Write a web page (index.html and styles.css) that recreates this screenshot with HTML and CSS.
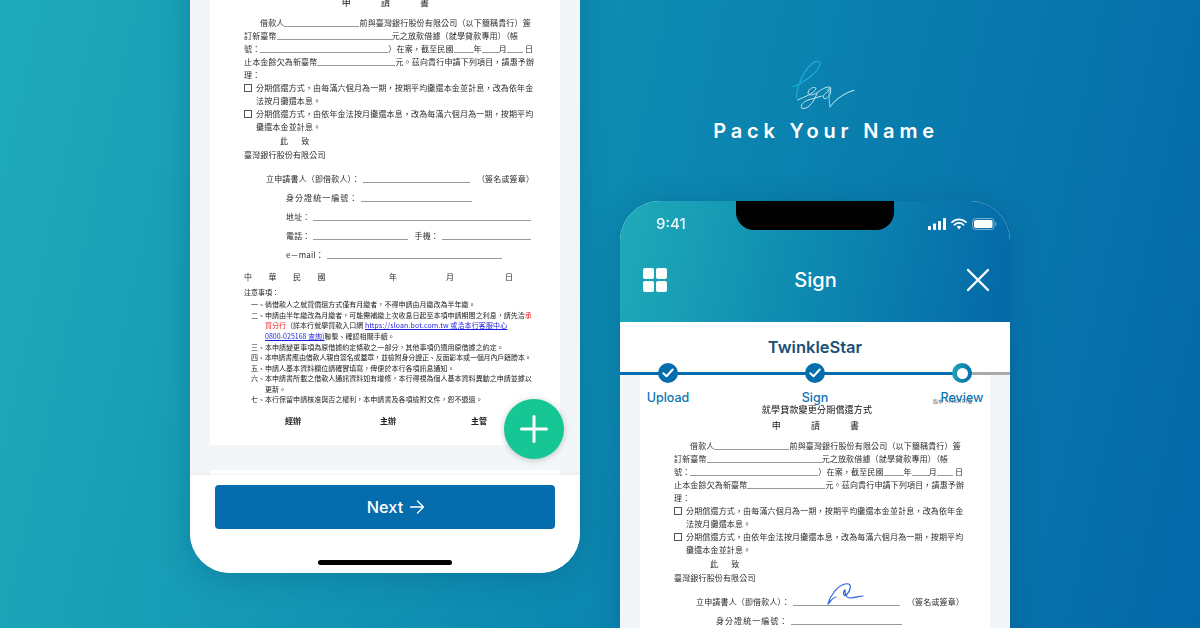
FILE: index.html
```html
<!DOCTYPE html>
<html lang="zh-Hant">
<head>
<meta charset="utf-8">
<title>Pack Your Name</title>
<link rel="stylesheet" href="styles.css">
</head>
<body>
<main class="canvas">

  <section class="phone phone-left">
    <div class="viewport">
      <article class="page">
        <div class="doc">
          <div class="l title">就學貸款變更分期償還方式</div>
          <div class="l subtitle"><span>申</span><span>請</span><span>書</span></div>
          <div class="l first"><span class="in16">借款人</span><i class="u u75"></i><span>前與臺灣銀行股份有限公司（以下簡稱貴行）簽</span></div>
          <div class="l"><span>訂新臺幣</span><i class="u u115"></i><span>元之放款借據（就學貸款專用）（帳</span></div>
          <div class="l"><span>號：</span><i class="u u128"></i><span>）在案，截至民國</span><i class="u u20"></i><span>年</span><i class="u u17"></i><span>月</span><i class="u u16"></i><span class="ml2">日</span></div>
          <div class="l"><span>止本金餘欠為新臺幣</span><i class="u u78"></i><span>元。茲向貴行申請下列項目，請惠予辦</span></div>
          <div class="l"><span>理：</span></div>
          <div class="l"><b class="box"></b><span>分期償還方式，由每滿六個月為一期，按期平均攤還本金並計息，改為依年金</span></div>
          <div class="l in12"><span>法按月攤還本息。</span></div>
          <div class="l"><b class="box"></b><span>分期償還方式，由依年金法按月攤還本息，改為每滿六個月為一期，按期平均</span></div>
          <div class="l in12"><span>攤還本金並計息。</span></div>
          <div class="l gap14 in36 wide"><span>此</span><span>致</span></div>
          <div class="l gap14"><span>臺灣銀行股份有限公司</span></div>
          <div class="l gap24 in22"><span>立申請書人（即借款人）：</span><i class="u u107 ml3"></i><span class="ml7">（簽名或簽章）</span></div>
          <div class="l gap19 in42"><span class="sp1">身分證統一編號：</span><i class="u u111 ml3"></i></div>
          <div class="l gap19 in42"><span>地址：</span><i class="u u218 ml3"></i></div>
          <div class="l gap19 in42"><span>電話：</span><i class="u u95 ml3"></i><span class="ml6">手機：</span><i class="u u89 ml3"></i></div>
          <div class="l gap19 in42"><span>e－mail：</span><i class="u u175 ml3"></i></div>
          <div class="l gap22 date"><span class="c">中</span><span class="c">華</span><span class="c">民</span><span class="c">國</span><span class="c-y">年</span><span class="c-m">月</span><span>日</span></div>
          <div class="n gap15"><span>注意事項：</span></div>
          <div class="n gap12 in7"><span>一、倘借款人之就貸償還方式僅有月繳者，不得申請由月繳改為半年繳。</span></div>
          <div class="n in7"><span>二、申請由半年繳改為月繳者，可能需補繳上次收息日起至本項申請期間之利息，請先洽<em>承</em></span></div>
          <div class="n in21"><span><em>貸分行</em>（詳本行就學貸款入口網 <a class="url">https://sloan.bot.com.tw 或洽本行客服中心</a></span></div>
          <div class="n in21"><span><a>0800-025168 查詢)</a>聯繫、確認相關手續。</span></div>
          <div class="n in7"><span>三、本申請變更事項為原借據約定條款之一部分，其他事項仍適用原借據之約定。</span></div>
          <div class="n in7 tight"><span>四、本申請書應由借款人親自簽名或蓋章，並檢附身分證正、反面影本或一個月內戶籍謄本。</span></div>
          <div class="n in7"><span>五、申請人基本資料欄位請確實填寫，俾便於本行各項訊息通知。</span></div>
          <div class="n in7"><span>六、本申請書所載之借款人通訊資料如有增修，本行得視為個人基本資料異動之申請並據以</span></div>
          <div class="n in21"><span>更新。</span></div>
          <div class="n in7"><span>七、本行保留申請核准與否之權利，本申請書及各項檢附文件，恕不退還。</span></div>
          <div class="n gap22 sign-row"><span class="s1">經辦</span><span class="s2">主辦</span><span>主管</span></div>
        </div>
      </article>
      <div class="next-page"></div>
      <button class="fab" type="button" aria-label="Add">
        <svg viewBox="0 0 30 30" width="30" height="30"><path d="M15 2.5v25M2.5 15h25" stroke="#fff" stroke-width="3" stroke-linecap="round"/></svg>
      </button>
    </div>
    <footer class="bar">
      <button class="next" type="button">Next
        <svg viewBox="0 0 16 16" width="16" height="16"><path d="M1.5 8h12.5M8.5 2l6 6-6 6" fill="none" stroke="#fff" stroke-width="1.3" stroke-linecap="round" stroke-linejoin="round"/></svg>
      </button>
      <div class="home"></div>
    </footer>
  </section>

  <section class="brand">
    <svg class="brand-sign" viewBox="0 0 90 65" width="90" height="65" fill="none" stroke-linecap="round" stroke-linejoin="round">
      <defs>
        <linearGradient id="sg" x1="0" y1="0" x2="1" y2="0.6">
          <stop offset="0" stop-color="#4fc0e0"/>
          <stop offset="0.45" stop-color="#8fd0e6"/>
          <stop offset="1" stop-color="#e2f1f7"/>
        </linearGradient>
      </defs>
      <path d="M17.6 48C17.5 37 24 22 32 14.500C36 11 41 10 41 13.500C41 20 30 28.500 22 33C19 35 16 36 14 36.500" stroke="#1cb0da" stroke-width="1.100"/>
      <path d="M18.500 50C26 47 35 43 37 39C37.500 36.500 31.500 37 29.500 41C27.500 46 34 46 39 42C43 39 50 35 52 38C51.500 41 46 42 44.500 46C43.500 50 47.500 49 50 46C53 42 52 36 48 40" stroke="#c0e3f0" stroke-width="1"/>
      <path d="M38 43C36 50 30 59 24 58.500C20 58 23 52 29 50C33 49 39 47 43 46" stroke="#c8e6f2" stroke-width="1"/>
      <path d="M50 37C50 44 50 53 51 57C56 50 63 45 70 42C73 41 72 41 75 40.500" stroke="url(#sg)" stroke-width="1.100"/>
    </svg>
    <h1 class="brand-name">Pack Your Name</h1>
  </section>

  <section class="phone phone-right">
    <header class="head">
      <div class="notch"></div>
      <div class="status">
        <span class="time">9:41</span>
        <span class="status-icons">
          <svg viewBox="0 0 18 12" width="18" height="12"><g fill="#fff"><rect x="0" y="8" width="3" height="4" rx=".7"/><rect x="5" y="5.500" width="3" height="6.500" rx=".7"/><rect x="10" y="3" width="3" height="9" rx=".7"/><rect x="15" y="0" width="3" height="12" rx=".7"/></g></svg>
          <svg viewBox="0 0 16 12" width="16" height="12"><path d="M1 4.200a10 10 0 0 1 14 0M3.400 6.800a6.600 6.600 0 0 1 9.200 0" fill="none" stroke="#fff" stroke-width="1.700" stroke-linecap="round"/><path d="M5.800 8.800a3.200 3.200 0 0 1 4.400 0L8 11.500z" fill="#fff"/></svg>
          <svg viewBox="0 0 25 12" width="25" height="12"><rect x=".5" y=".5" width="21.500" height="11" rx="3" fill="none" stroke="#fff" stroke-opacity=".45"/><rect x="2" y="2" width="18.500" height="8" rx="1.700" fill="#fff"/><path d="M23.200 4v4a2.200 2.200 0 0 0 0-4z" fill="#fff" fill-opacity=".45"/></svg>
        </span>
      </div>
      <div class="nav">
        <svg viewBox="0 0 24 24" width="24" height="24"><g fill="#fff"><rect width="11" height="11" rx="2"/><rect x="13" width="11" height="11" rx="2"/><rect y="13" width="11" height="11" rx="2"/><rect x="13" y="13" width="11" height="11" rx="2"/></g></svg>
        <span class="nav-title">Sign</span>
        <svg viewBox="0 0 24 24" width="24" height="24"><path d="M2 2l20 20M22 2L2 22" stroke="#fff" stroke-width="2.400" stroke-linecap="round"/></svg>
      </div>
    </header>
    <div class="steps-head">
      <h2 class="flow-name">TwinkleStar</h2>
    </div>
    <div class="viewport-right">
      <div class="stepper">
        <div class="track"><i class="track-done"></i><i class="track-rest"></i></div>
        <div class="step">
          <span class="dot"><svg viewBox="0 0 12 10" width="12" height="10"><path d="M1.300 5.200l3.200 3L10.700 1.500" fill="none" stroke="#fff" stroke-width="2" stroke-linecap="round" stroke-linejoin="round"/></svg></span>
          <span class="label">Upload</span>
        </div>
        <div class="step">
          <span class="dot"><svg viewBox="0 0 12 10" width="12" height="10"><path d="M1.300 5.200l3.200 3L10.700 1.500" fill="none" stroke="#fff" stroke-width="2" stroke-linecap="round" stroke-linejoin="round"/></svg></span>
          <span class="label">Sign</span>
        </div>
        <div class="step">
          <span class="dot dot-now"><b></b></span>
          <span class="label">Review</span>
        </div>
      </div>
      <article class="page page-right">
        <div class="doc">
          <div class="tiny">版本：1100701版</div>
          <div class="l title">就學貸款變更分期償還方式</div>
          <div class="l subtitle"><span>申</span><span>請</span><span>書</span></div>
          <div class="l first"><span class="in16">借款人</span><i class="u u75"></i><span>前與臺灣銀行股份有限公司（以下簡稱貴行）簽</span></div>
          <div class="l"><span>訂新臺幣</span><i class="u u115"></i><span>元之放款借據（就學貸款專用）（帳</span></div>
          <div class="l"><span>號：</span><i class="u u128"></i><span>）在案，截至民國</span><i class="u u20"></i><span>年</span><i class="u u17"></i><span>月</span><i class="u u16"></i><span class="ml2">日</span></div>
          <div class="l"><span>止本金餘欠為新臺幣</span><i class="u u78"></i><span>元。茲向貴行申請下列項目，請惠予辦</span></div>
          <div class="l"><span>理：</span></div>
          <div class="l"><b class="box"></b><span>分期償還方式，由每滿六個月為一期，按期平均攤還本金並計息，改為依年金</span></div>
          <div class="l in12"><span>法按月攤還本息。</span></div>
          <div class="l"><b class="box"></b><span>分期償還方式，由依年金法按月攤還本息，改為每滿六個月為一期，按期平均</span></div>
          <div class="l in12"><span>攤還本金並計息。</span></div>
          <div class="l gap14 in36 wide"><span>此</span><span>致</span></div>
          <div class="l gap14"><span>臺灣銀行股份有限公司</span></div>
          <div class="l gap24 in22"><span>立申請書人（即借款人）：</span><i class="u u107 ml3 signed"><svg viewBox="0 0 45 28" width="45" height="28" class="ink"><path d="M4 26C6 18 13 8 21 6C26 5 27 7 26 11C25 15 21 19 20 17C19 15 20 13 21 12C21 16 22 20 26 20C31 20 35 18 39 18M4 26C6 24 8 20 12 19" fill="none" stroke="#2a5fe6" stroke-width="1.200" stroke-linecap="round" stroke-linejoin="round"/></svg></i><span class="ml7">（簽名或簽章）</span></div>
          <div class="l gap19 in42"><span class="sp1">身分證統一編號：</span><i class="u u111 ml3"></i></div>
        </div>
      </article>
    </div>
  </section>

</main>
</body>
</html>
```

FILE: styles.css
```css
* { box-sizing: border-box; margin: 0; padding: 0; }
html, body { width: 1200px; height: 628px; overflow: hidden; }
body { font-family: Inter, "Noto Sans", sans-serif; }

.canvas {
  position: relative;
  width: 1200px;
  height: 628px;
  overflow: hidden;
  background: linear-gradient(102deg, #1fabb9 0%, #0d8bb1 48%, #0468a9 100%);
}

/* ---------- phones ---------- */
.phone {
  position: absolute;
  width: 390px;
  background: #f3f6f8;
  border-radius: 40px;
  overflow: hidden;
  box-shadow: 0 4px 30px rgba(0, 60, 110, .28);
  display: flex;
  flex-direction: column;
}
.phone-left { left: 190px; top: -67px; height: 640px; }
.phone-right { left: 620px; top: 201px; height: 470px; background: #fff; }

.viewport {
  position: relative;
  flex: 1;
  overflow: visible;
  padding-top: 16px;
  display: flex;
  flex-direction: column;
  align-items: center;
  min-height: 0;
}
.page {
  width: 350px;
  height: 496px;
  flex: none;
  background: #fff;
  overflow: hidden;
}
.next-page {
  width: 350px;
  flex: none;
  height: 5px;
  margin-top: 25px;
  background: #fff;
}
.fab {
  position: absolute;
  left: 314px;
  top: 466px;
  width: 60px;
  height: 60px;
  border: 0;
  border-radius: 50%;
  background: #16c795;
  box-shadow: 0 1px 6px rgba(0, 0, 0, .22);
  display: flex;
  align-items: center;
  justify-content: center;
  z-index: 2;
}
.bar {
  flex: none;
  height: 98px;
  background: #fff;
  padding: 10px 25px 0;
  position: relative;
  box-shadow: 0 -1px 3px rgba(0, 0, 0, .05);
  display: flex;
  flex-direction: column;
  align-items: center;
}
.next {
  width: 340px;
  height: 44px;
  border: 0;
  padding-left: 22px;
  border-radius: 4px;
  background: #056cae;
  color: #fff;
  font: 500 16.300px Inter, sans-serif;
  display: flex;
  align-items: center;
  justify-content: center;
  gap: 6px;
}
.home {
  width: 134px;
  height: 5px;
  margin-top: 31px;
  border-radius: 3px;
  background: #000;
}

/* ---------- document ---------- */
.doc {
  padding: 31px 28px 0 34px;
  width: 350px;
  font-family: "Noto Sans CJK TC", sans-serif;
  font-size: 8px;
  letter-spacing: .16px;
  color: #2b2b2b;
  filter: blur(.35px);
}
.l { display: flex; align-items: center; height: 13px; white-space: nowrap; }
.n {
  display: flex;
  align-items: center;
  height: 10.550px;
  white-space: nowrap;
  font-size: 7px;
  letter-spacing: .02px;
  color: #222;
}
.tight { letter-spacing: -.16px; }
.url { letter-spacing: .12px; }
.sp1 { letter-spacing: 1.050px; }
.title {
  justify-content: center;
  font-size: 9px;
  letter-spacing: .2px;
  color: #111;
  padding-right: 2px;
  height: 12px;
}
.subtitle {
  height: 20px;
  gap: 30px;
  justify-content: center;
  padding-right: 5px;
  color: #111;
  font-size: 9px;
}
.first { height: 17px; padding-top: 4px; }
.u { display: block; height: 9px; border-bottom: 1px solid #999; flex: none; position: relative; }
.u16 { width: 16px; } .u17 { width: 17px; } .u20 { width: 20px; }
.u75 { width: 75px; } .u78 { width: 78px; } .u89 { width: 89px; }
.u95 { width: 95px; } .u107 { width: 107px; } .u111 { width: 111px; }
.u115 { width: 115px; } .u128 { width: 128px; } .u175 { width: 175px; }
.u218 { width: 218px; }
.ml2 { margin-left: 2px; } .ml3 { margin-left: 3px; }
.ml6 { margin-left: 6px; } .ml7 { margin-left: 7px; }
.in16 { margin-left: 16px; }
.in12 { padding-left: 12px; } .in36 { padding-left: 36px; }
.in22 { padding-left: 22px; } .in42 { padding-left: 42px; }
.in7 { padding-left: 7px; } .in21 { padding-left: 21px; }
.box { width: 8px; height: 8px; border: 1px solid #555; margin-right: 4px; flex: none; }
.wide { gap: 13px; }
.gap12 { margin-top: 1.500px; }
.gap14 { margin-top: 1px; }
.gap15 { margin-top: 4px; }
.gap19 { margin-top: 6px; }
.gap22 { margin-top: 9px; }
.gap24 { margin-top: 11px; }
.date span { flex: none; }
.c { width: 24.500px; }
.c-y { margin-left: 47px; margin-right: 49px; width: 8px; }
.c-m { margin-right: 51px; width: 8px; }
.n em { font-style: normal; color: #f01818; }
.n a { color: #1a1ae0; text-decoration: underline; }
.sign-row { margin-top: 11px; padding-left: 41px; font-weight: 700; font-size: 8px; color: #222; }
.s1 { width: 95px; }
.s2 { width: 91px; }

/* ---------- brand ---------- */
.brand {
  position: absolute;
  left: 640px;
  top: 50px;
  width: 372px;
  display: flex;
  flex-direction: column;
  align-items: center;
}
.brand-sign { display: block; margin-left: -4px; }
.brand-name {
  margin-top: 5px;
  font: 600 20px/22px Inter, sans-serif;
  letter-spacing: 4.800px;
  color: #fff;
  white-space: nowrap;
}

/* ---------- right phone ---------- */
.head {
  flex: none;
  height: 121px;
  position: relative;
  background: linear-gradient(102deg, #1fabb9 0%, #0d89b0 50%, #0468a9 100%);
  color: #fff;
}
.notch {
  position: absolute;
  left: 116px;
  top: 0;
  width: 158px;
  height: 29px;
  background: #000;
  border-radius: 0 0 18px 18px;
}
.status {
  height: 45px;
  padding: 0 13px 0 36px;
  display: flex;
  justify-content: space-between;
  align-items: center;
}
.time { font: 500 15px Inter, sans-serif; opacity: .92; }
.status-icons { display: flex; align-items: center; gap: 5px; }
.nav {
  padding: 22px 20px 0 23px;
  display: flex;
  justify-content: space-between;
  align-items: center;
}
.nav-title { font: 500 20px/24px Inter, sans-serif; margin-right: 2px; }
.steps-head {
  flex: none;
  height: 50px;
  display: flex;
  justify-content: center;
  padding-top: 14px;
  background: #fff;
}
.flow-name {
  font: 600 16.500px/22px Inter, sans-serif;
  color: #1b4f74;
}
.viewport-right {
  position: relative;
  flex: 1;
  background: #f3f6f8;
  display: flex;
  flex-direction: column;
  align-items: center;
}
.stepper {
  position: absolute;
  left: 0;
  top: -9px;
  width: 390px;
  height: 50px;
  padding: 0 0 0 21px;
  display: flex;
  gap: 74px;
  z-index: 2;
}
.track { position: absolute; left: 0; right: 0; top: 9px; height: 3px; display: flex; }
.track-done { width: 342px; background: #056cae; }
.track-rest { flex: 1; background: #a9a9a9; }
.step {
  width: 54px;
  margin-right: 19px;
  position: relative;
  display: flex;
  flex-direction: column;
  align-items: center;
}
.dot {
  width: 20px;
  height: 20px;
  border-radius: 50%;
  background: #056cae;
  display: flex;
  align-items: center;
  justify-content: center;
}
.dot-now { background: linear-gradient(100deg, #1fabb9, #0468a9); }
.dot-now b { width: 11px; height: 11px; border-radius: 50%; background: #fff; }
.label {
  margin-top: 7px;
  font: 500 12.500px/16px Inter, sans-serif;
  color: #0d74b4;
}
.page-right { height: 300px; }
.tiny {
  height: 0;
  margin-top: -5px;
  margin-bottom: 5px;
  padding-left: 259px;
  font-size: 5px;
  line-height: 6px;
  letter-spacing: 0;
  color: #666;
  white-space: nowrap;
}
.signed .ink { position: absolute; left: 31px; top: -19px; }
```
